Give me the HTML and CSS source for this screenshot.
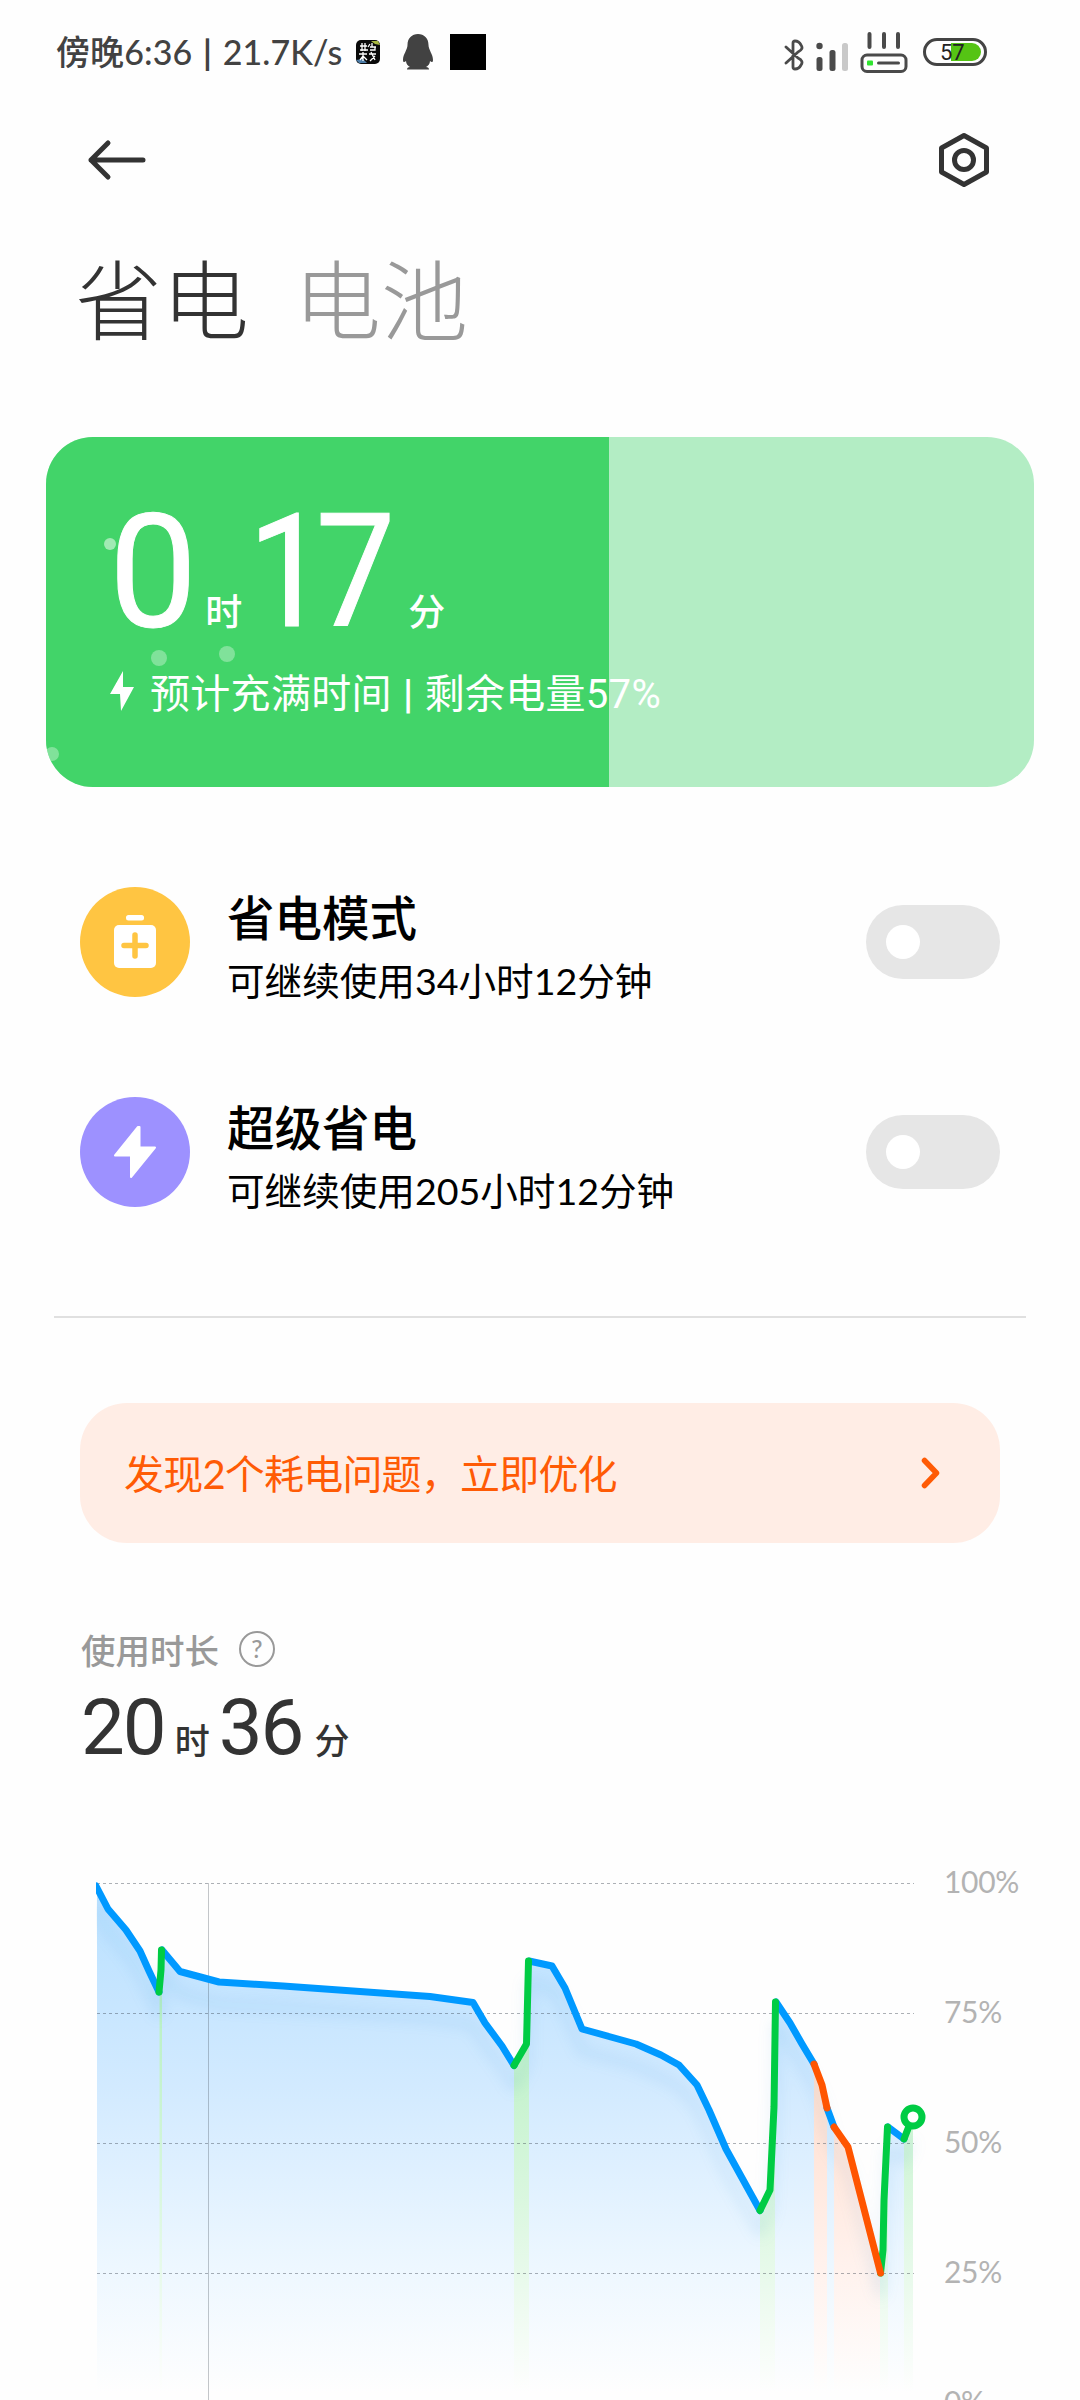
FILE: index.html
```html
<!DOCTYPE html>
<html lang="zh-CN">
<head>
  <meta charset="UTF-8">
  <meta name="viewport" content="width=device-width, initial-scale=1.0">
  <title>省电与电池</title>
  <link rel="stylesheet" href="styles.css">
</head>
<body>
  <div class="screen">
    <div class="status-bar">
      <span class="status-text">傍晚6:36 <em>|</em> 21.7K/s</span>
      <svg class="app-icon" width="24" height="24" viewBox="0 0 24 24">
        <rect width="24" height="24" rx="5" fill="#0a0a0a"/>
        <path d="M15 1h7l2 4-5-1z" fill="#a8b840"/>
        <path d="M0 20l7-1 4 4H3z" fill="#4d7da8"/>
        <path d="M4 6h7M6 3v8M9 3v8M4 10h8M14 4l-2 3M16 3v4M14 7h6M14 10h5v-3M3 14h8M7 12v9M4 20l3-4 4 4M13 14h7M15 12l4 8M19 16l-5 5" stroke="#fff" stroke-width="1.3" fill="none"/>
      </svg>
      <svg class="qq-icon" width="30" height="36" viewBox="0 0 30 36">
        <path d="M15 0C9 0 4.500 4 4.500 11c0 5-4.500 9-4.500 15 0 2 1 3 3 1 0 3 2 5 4 6-2 0-3 1-3 2.500h22c0-1.500-1-2.500-3-2.500 2-1 4-3 4-6 2 2 3 1 3-1 0-6-4.500-10-4.500-15 0-7-4.500-11-10.500-11z" fill="#424242"/>
      </svg>
      <span class="square-icon"></span>
      <div class="status-icons">
        <svg class="bluetooth" width="20" height="32" viewBox="0 0 20 32" fill="none" stroke="#4a4a4a" stroke-width="2.8" stroke-linecap="round" stroke-linejoin="round">
          <path d="M2 8l12 11q6 3 3 7-2 4-6 4-2 0-2-2V4q0-2 2-2 4 0 6 4 3 4-3 7L2 24"/>
        </svg>
        <svg class="signal" width="33" height="30" viewBox="0 0 33 30">
          <circle cx="3.5" cy="4" r="3.2" fill="#4a4a4a"/>
          <rect x="0.5" y="15" width="6" height="14" rx="2.5" fill="#4a4a4a"/>
          <rect x="13.500" y="8" width="6" height="21" rx="2.500" fill="#4a4a4a"/>
          <rect x="26" y="1" width="6" height="28" rx="2.500" fill="#c9c9c9"/>
        </svg>
        <svg class="router" width="48" height="42" viewBox="0 0 48 42" fill="none" stroke="#4a4a4a">
          <path d="M9.500 3v13M24 3v13M38 3v13" stroke-width="4" stroke-linecap="round"/>
          <rect x="2" y="24" width="44" height="16.500" rx="5" stroke-width="3"/>
          <path d="M18.500 32h20" stroke-width="3" stroke-linecap="round"/>
          <rect x="7" y="29.500" width="6" height="5" rx="1" fill="#30e530" stroke="none"/>
        </svg>
        <span class="battery"><span class="battery-level"></span><span class="battery-text">57</span></span>
      </div>
    </div>

    <div class="toolbar">
      <svg width="60" height="42" viewBox="0 0 60 42" fill="none" stroke="#333" stroke-width="5" stroke-linecap="round" stroke-linejoin="round">
        <path d="M21 4L4 21l17 17M4 21h52"/>
      </svg>
      <svg width="52" height="56" viewBox="0 0 52 56" fill="none" stroke="#333" stroke-width="5" stroke-linejoin="round">
        <path d="M26 3.500L48.500 16v24L26 52.500 3.500 40V16z"/>
        <circle cx="26" cy="28" r="9.500"/>
      </svg>
    </div>

    <div class="tabs">
      <span class="tab active">省电</span>
      <span class="tab">电池</span>
    </div>

    <div class="battery-card">
      <div class="battery-fill"></div>
      <i class="bubble b1"></i><i class="bubble b2"></i><i class="bubble b3"></i><i class="bubble b4"></i>
      <div class="charge-time"><b>0</b><span class="unit hour">时</span><b class="minutes">17</b><span class="unit minute">分</span></div>
      <div class="charge-info">
        <svg width="24" height="40" viewBox="0 0 24 40"><path d="M13 0L0 23h10l1 17 13-24H13z" fill="#fff"/></svg>
        <span>预计充满时间 <em>|</em> 剩余电量57%</span>
      </div>
    </div>

    <div class="mode">
      <div class="mode-icon yellow">
        <svg width="44" height="54" viewBox="0 0 44 54">
          <rect x="13" y="0" width="18" height="5.500" rx="2.500" fill="#fff"/>
          <rect x="1" y="10" width="42" height="43" rx="5" fill="#fff"/>
          <path d="M22 20v21M11 30.500h22" stroke="#ffc542" stroke-width="5.500" stroke-linecap="round"/>
        </svg>
      </div>
      <div class="mode-text">
        <h2>省电模式</h2>
        <p>可继续使用34小时12分钟</p>
      </div>
      <span class="switch"></span>
    </div>
    <div class="mode">
      <div class="mode-icon purple">
        <svg width="44" height="54" viewBox="0 0 44 54">
          <path d="M25 2L2 30.500h16V52L42 22.500H26.500V2z" fill="#fff" stroke="#fff" stroke-width="2" stroke-linejoin="round"/>
        </svg>
      </div>
      <div class="mode-text">
        <h2>超级省电</h2>
        <p>可继续使用205小时12分钟</p>
      </div>
      <span class="switch"></span>
    </div>

    <div class="divider"></div>

    <div class="notice">
      <span class="notice-text">发现2个耗电问题，立即优化</span>
      <svg width="20" height="32" viewBox="0 0 20 32" fill="none" stroke="#ff5b05" stroke-width="5.500" stroke-linecap="round" stroke-linejoin="round">
        <path d="M3.500 3.500l12 12.500-12 12.500"/>
      </svg>
    </div>

    <div class="usage-label">
      <span>使用时长</span>
      <span class="help">?</span>
    </div>
    <div class="usage-time"><b>20</b><span class="hour">时</span><b>36</b><span class="minute">分</span></div>

    <div class="chart">
      <svg class="plot" width="840" height="540" viewBox="90 1860 840 540">
        <defs>
          <linearGradient id="blueFill" gradientUnits="userSpaceOnUse" x1="0" y1="1884" x2="0" y2="2392">
            <stop offset="0" stop-color="#b8e0ff"/>
            <stop offset="0.400" stop-color="#d2eaff"/>
            <stop offset="0.750" stop-color="#edf7ff"/>
            <stop offset="1" stop-color="#fefefe"/>
          </linearGradient>
          <linearGradient id="greenFill" gradientUnits="userSpaceOnUse" x1="0" y1="1980" x2="0" y2="2392">
            <stop offset="0" stop-color="#b4efc0"/>
            <stop offset="0.550" stop-color="#dbf7e0"/>
            <stop offset="1" stop-color="#fefefe"/>
          </linearGradient>
          <linearGradient id="orangeFill" gradientUnits="userSpaceOnUse" x1="0" y1="2060" x2="0" y2="2392">
            <stop offset="0" stop-color="#ffdccb"/>
            <stop offset="0.600" stop-color="#fff1ec"/>
            <stop offset="1" stop-color="#fefefe"/>
          </linearGradient>
          <clipPath id="plotClip"><rect x="96" y="1860" width="834" height="540"/></clipPath>
        </defs>

        <!-- area under the curve -->
        <path fill="url(#blueFill)" d="M97 1888L108 1909 126 1930 140 1951 149 1971 159 1992 161 1950 180 1971 219 1982 283 1986 430 1996 473 2002 485 2023 502 2046 514 2065 526 2044 529 1961 552 1966 565 1988 582 2029 636 2044 661 2055 679 2065 697 2085 709 2110 726 2149 760 2210 770 2190 774 2107 776 2002 790 2023 802 2044 814 2064 822 2085 827 2108 834 2127 848 2147 880 2273 883 2250 888 2127 904 2139 913 2117V2400H97z"/>
        <path fill="url(#greenFill)" d="M159.500 1992h2.500V2400h-2.500zM514 2065L526 2044 529 2035V2400H514zM760 2210L770 2190 775 2100V2400H760zM880 2273L883 2250 888 2127V2400H880zM904 2139L913 2117V2400H904z"/>
        <path fill="url(#orangeFill)" d="M814 2064L822 2085 827 2108V2400H814zM834 2127L848 2147 880 2273V2400H834z"/>

        <g class="grid">
          <path d="M97 1883.500H914M97 2013.500H914M97 2143.500H914M97 2273.500H914"/>
          <path class="midnight" d="M208.500 1883V2400"/>
        </g>

        <g class="curve" clip-path="url(#plotClip)">
          <path class="blue" d="M96 1886L108 1909 126 1930 140 1951 149 1971 159 1992M162 1950L180 1971.500 219 1982 283 1986 430 1996.500 473 2002.500 485 2023 502 2046 514 2065.500M529 1961L552 1966 565 1988 582 2029 636 2044 661 2055 679 2065 697 2085 709 2110 726 2149 760 2210.500M776 2002L790 2023 802 2044 814 2064M827 2108L834 2127M888 2127L904 2139"/>
          <path class="green" d="M159 1992L161 1970 161.500 1950M514 2065.500L526.500 2044 528.500 1961M760 2210.500L770 2190 774 2107 775.500 2002M880.500 2273L883 2250 884 2200 887.500 2127M904 2139L911 2121"/>
          <path class="orange" d="M814 2064L822 2085 827 2108M834 2127L848 2147 880.500 2273"/>
        </g>
        <circle cx="913" cy="2117" r="9" fill="#fff" stroke="#00cc44" stroke-width="7"/>
      </svg>
      <div class="scale">
        <span>100%</span>
        <span>75%</span>
        <span>50%</span>
        <span>25%</span>
        <span>0%</span>
      </div>
    </div>
  </div>
</body>
</html>
```
FILE: styles.css
```css
/* General Styles */
* {
  box-sizing: border-box;
}

body {
  margin: 0;
  background-color: #fefefe;
  font-family: Lato, "Noto Sans CJK SC", sans-serif;
  color: #333;
}

h2,
p {
  margin: 0;
}

b,
i,
em {
  font-weight: inherit;
  font-style: normal;
}

svg {
  display: block;
  flex-shrink: 0;
}

.screen {
  width: 1080px;
  height: 2400px;
  overflow: hidden;
}

/* Status bar */
.status-bar {
  display: flex;
  align-items: center;
  height: 104px;
  padding-left: 56px;
  padding-right: 93px;
  color: #424242;
}

.status-text {
  width: 300px;
  font-size: 34px;
  font-weight: 500;
  line-height: 50px;
  letter-spacing: 0.1px;
  white-space: nowrap;
}

.status-text em {
  margin: 0 2px;
  font-weight: 700;
}

.qq-icon {
  margin-left: 23px;
}

.square-icon {
  width: 36px;
  height: 36px;
  margin-left: 17px;
  background-color: #000;
}

.status-icons {
  display: flex;
  align-items: center;
  margin-left: auto;
}

.bluetooth {
  margin-top: 6px;
}

.signal {
  margin-left: 12px;
  margin-top: 10px;
}

.router {
  margin-left: 11px;
}

.battery {
  position: relative;
  width: 64px;
  height: 28px;
  margin-left: 15px;
  border: 3px solid #444;
  border-radius: 14px;
}

.battery-level {
  position: absolute;
  top: 2px;
  right: 3px;
  width: 30px;
  height: 18px;
  background-color: #55c414;
  border-radius: 0 9px 9px 0;
}

.battery-text {
  position: absolute;
  top: 0;
  left: 14px;
  font-family: Roboto, sans-serif;
  font-size: 22px;
  line-height: 23px;
  color: #222;
}

/* Toolbar and tabs */
.toolbar {
  display: flex;
  align-items: center;
  justify-content: space-between;
  height: 112px;
  padding: 0 90px 0 87px;
}

.tabs {
  display: flex;
  gap: 45px;
  height: 221px;
  padding-left: 75px;
  padding-top: 20px;
}

.tab {
  font-family: "Noto Sans CJK SC", sans-serif;
  font-size: 87px;
  font-weight: 300;
  line-height: 120px;
  color: #999;
}

.tab.active {
  color: #333;
}

/* Charging card */
.battery-card {
  position: relative;
  width: 988px;
  height: 350px;
  margin-left: 46px;
  padding-left: 63px;
  padding-top: 55px;
  border-radius: 47px;
  overflow: hidden;
  background-color: #b3edc4;
  color: #fff;
}

.battery-fill {
  position: absolute;
  left: 0;
  top: 0;
  width: 57%;
  height: 100%;
  background-color: #42d469;
}

.bubble {
  position: absolute;
  width: 16px;
  height: 16px;
  border-radius: 50%;
  background-color: rgba(255, 255, 255, 0.33);
}

.b1 {
  left: 58px;
  top: 101px;
  width: 12px;
  height: 12px;
  background-color: rgba(255, 255, 255, 0.5);
}

.b2 {
  left: 105px;
  top: 213px;
}

.b3 {
  left: 173px;
  top: 209px;
}

.b4 {
  left: -1px;
  top: 310px;
  width: 14px;
  height: 14px;
}

.charge-time {
  position: relative;
  height: 160px;
  font-size: 37px;
  font-weight: 500;
  line-height: 160px;
  white-space: nowrap;
}

.charge-time b {
  font-family: Roboto, sans-serif;
  font-size: 157px;
  font-weight: 400;
  -webkit-text-stroke: 1px #fff;
}

/* narrower pair of digits */
.charge-time .minutes {
  display: inline-block;
  width: 148px;
  letter-spacing: -13px;
  transform: scaleX(0.9);
  transform-origin: left;
}

.charge-time .hour {
  margin-left: 8px;
  margin-right: 6px;
}

.charge-time .minute {
  margin-left: 12px;
}

.charge-info {
  position: relative;
  display: flex;
  align-items: center;
  gap: 16px;
  height: 78px;
  padding-left: 1px;
  font-family: Roboto, "Noto Sans CJK SC", sans-serif;
  font-size: 40px;
  letter-spacing: 0.3px;
  white-space: nowrap;
}

.charge-info em {
  margin: 0 1px;
  font-weight: 700;
}

/* Power saving modes */
.mode {
  display: flex;
  height: 110px;
  margin: 100px 80px 0;
}

.mode-icon {
  display: flex;
  align-items: center;
  justify-content: center;
  width: 110px;
  height: 110px;
  border-radius: 50%;
}

.yellow {
  background-color: #ffc542;
}

.purple {
  background-color: #9d91ff;
}

.mode-text {
  margin-left: 37px;
  color: #000;
}

.mode-text h2 {
  font-size: 47.5px;
  font-weight: 500;
  line-height: 62px;
}

.mode-text p {
  font-size: 37.6px;
  line-height: 63px;
}

.switch {
  width: 134px;
  height: 74px;
  margin-top: 18px;
  margin-left: auto;
  padding: 20px;
  border-radius: 37px;
  background-color: #e6e6e6;
}

.switch::before {
  content: "";
  display: block;
  width: 34px;
  height: 34px;
  border-radius: 50%;
  background-color: #fff;
}

.divider {
  height: 2px;
  margin: 109px 54px 0;
  background-color: #e0e0e0;
}

/* Notice */
.notice {
  display: flex;
  align-items: center;
  justify-content: space-between;
  height: 140px;
  margin: 85px 80px 0;
  padding: 0 59px 0 44px;
  border-radius: 47px;
  background-color: #ffede5;
  font-size: 40px;
  color: #ff5b05;
}

.notice-text {
  padding-top: 2px;
  line-height: 58px;
  letter-spacing: -0.8px;
}

/* Usage time */
.usage-label {
  display: flex;
  align-items: center;
  height: 48px;
  margin-top: 82px;
  padding-left: 81px;
  font-size: 34.5px;
  font-weight: 500;
  color: #999;
}

.help {
  width: 36px;
  height: 36px;
  margin-left: 20px;
  border: 2.5px solid #999;
  border-radius: 50%;
  font-size: 25px;
  line-height: 31px;
  text-align: center;
}

.usage-time {
  height: 102px;
  padding-top: 5px;
  padding-left: 81px;
  font-size: 35px;
  font-weight: 500;
  line-height: 100px;
  white-space: nowrap;
}

.usage-time b {
  font-family: Roboto, sans-serif;
  font-size: 78px;
  font-weight: 400;
  letter-spacing: -2px;
}

.usage-time .hour {
  margin-left: 10px;
  margin-right: 9px;
}

.usage-time .minute {
  margin-left: 12px;
}

/* Chart */
.chart {
  display: flex;
  margin-top: 85px;
  margin-left: 90px;
}

.grid path {
  fill: none;
  stroke: rgba(60, 70, 80, 0.42);
  stroke-width: 1;
  stroke-dasharray: 3 3;
}

.grid .midnight {
  stroke: rgba(60, 70, 80, 0.3);
  stroke-dasharray: none;
}

.curve {
  filter: drop-shadow(0 22px 7px rgba(0, 120, 200, 0.1));
}

.curve path {
  fill: none;
  stroke-width: 7;
  stroke-linecap: round;
  stroke-linejoin: round;
}

.curve .blue {
  stroke: #0099ff;
}

.curve .green {
  stroke: #00cc44;
}

.curve .orange {
  stroke: #ff5500;
}

.scale {
  display: flex;
  flex-direction: column;
  padding-top: 1px;
  margin-left: 14px;
}

.scale span {
  height: 130px;
  font-size: 30px;
  line-height: 40px;
  letter-spacing: -0.3px;
  color: #b3b3b3;
}
```
